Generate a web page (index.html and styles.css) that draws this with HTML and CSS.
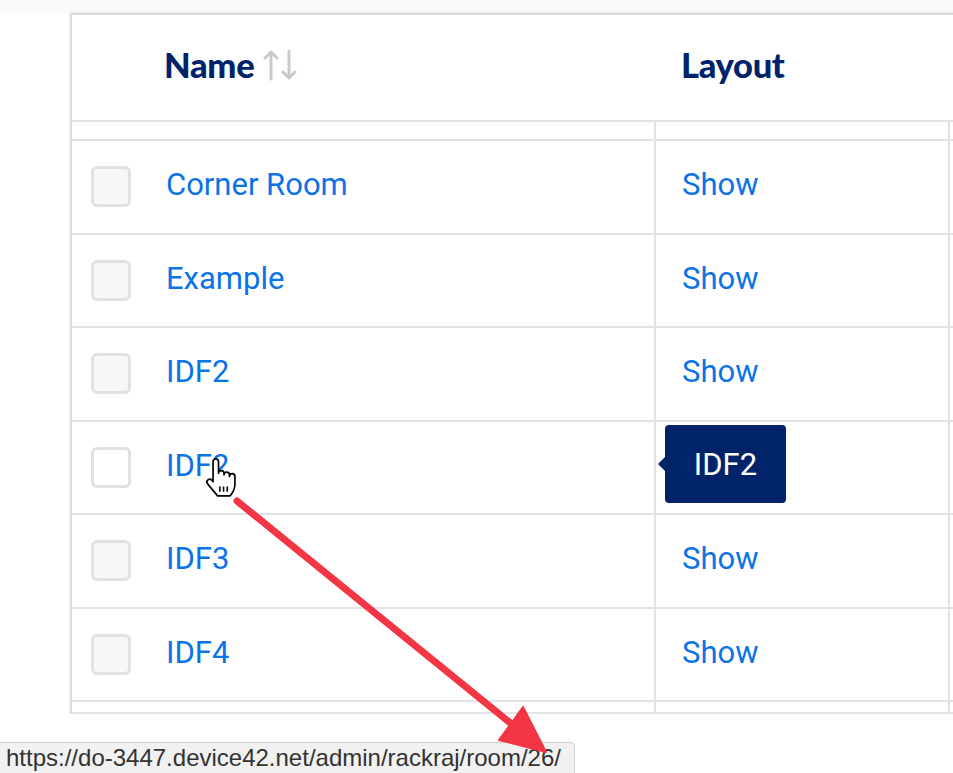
FILE: index.html
```html
<!DOCTYPE html>
<html>
<head>
<meta charset="utf-8">
<link rel="stylesheet" href="styles.css">
</head>
<body>
<div class="topstrip"></div>
<div class="card">
  <div class="row head">
    <div class="cell c-check"></div>
    <div class="cell c-name"><span class="th">Name</span>
      <svg class="sort" width="34" height="32" viewBox="0 0 34 32"><path d="M8 30V3M2 9l6-6 6 6M26 2v27M20 23l6 6 6-6" fill="none" stroke="#c9c9c9" stroke-width="3" stroke-linecap="round" stroke-linejoin="round"/></svg>
    </div>
    <div class="cell c-layout"><span class="th">Layout</span></div>
    <div class="cell c-rest"></div>
  </div>
  <div class="row spacer">
    <div class="cell c-check"></div><div class="cell c-name"></div><div class="cell c-layout bl"></div><div class="cell c-rest bl"></div>
  </div>
  <div class="row body">
    <div class="cell c-check"><span class="cb"></span></div>
    <div class="cell c-name"><a class="lnk">Corner Room</a></div>
    <div class="cell c-layout bl"><a class="lnk">Show</a></div>
    <div class="cell c-rest bl"></div>
  </div>
  <div class="row body">
    <div class="cell c-check"><span class="cb"></span></div>
    <div class="cell c-name"><a class="lnk">Example</a></div>
    <div class="cell c-layout bl"><a class="lnk">Show</a></div>
    <div class="cell c-rest bl"></div>
  </div>
  <div class="row body">
    <div class="cell c-check"><span class="cb"></span></div>
    <div class="cell c-name"><a class="lnk">IDF2</a></div>
    <div class="cell c-layout bl"><a class="lnk">Show</a></div>
    <div class="cell c-rest bl"></div>
  </div>
  <div class="row body hover">
    <div class="cell c-check"><span class="cb"></span></div>
    <div class="cell c-name"><a class="lnk">IDF2</a></div>
    <div class="cell c-layout bl"></div>
    <div class="cell c-rest bl"></div>
  </div>
  <div class="row body">
    <div class="cell c-check"><span class="cb"></span></div>
    <div class="cell c-name"><a class="lnk">IDF3</a></div>
    <div class="cell c-layout bl"><a class="lnk">Show</a></div>
    <div class="cell c-rest bl"></div>
  </div>
  <div class="row body">
    <div class="cell c-check"><span class="cb"></span></div>
    <div class="cell c-name"><a class="lnk">IDF4</a></div>
    <div class="cell c-layout bl"><a class="lnk">Show</a></div>
    <div class="cell c-rest bl"></div>
  </div>
  <div class="row tail">
    <div class="cell c-check"></div><div class="cell c-name"></div><div class="cell c-layout bl"></div><div class="cell c-rest bl"></div>
  </div>
</div>

<div class="tooltip">IDF2</div>

<svg class="cursor" width="38" height="42" viewBox="0 0 36 40">
  <path d="M9.5 4.5a2.6 2.6 0 0 1 5.2 0v11a2.6 2.6 0 0 1 5.2 0v1.5a2.6 2.6 0 0 1 5.2 0v1.5a2.6 2.6 0 0 1 5.2 0v8c0 5-2.5 8-4.5 10.5h-12c-2.5-3-6.5-7.5-9.5-11.5a2.6 2.6 0 0 1 4-3.4l1.2 1.4z" fill="#fff" stroke="#000" stroke-width="1.6" stroke-linejoin="round"/>
  <path d="M16 28v5M19.5 28v5M23 28v5" stroke="#000" stroke-width="1.5"/>
</svg>

<div class="status">https://do-3447.device42.net/admin/rackraj/room/26/</div>

<svg class="annot" width="953" height="773" viewBox="0 0 953 773">
  <line x1="237" y1="501" x2="514" y2="726" stroke="#f23646" stroke-width="7" stroke-linecap="round"/>
  <polygon points="523,707 499,740 546,752" fill="#f23646" stroke="#f23646" stroke-width="2" stroke-linejoin="round"/>
</svg>
</body>
</html>
```

FILE: styles.css
```css
html, body {
  margin: 0;
  padding: 0;
  background: #fff;
  overflow: hidden;
  width: 953px;
  height: 773px;
}
body {
  font-family: Roboto, "Noto Sans", sans-serif;
}
.topstrip {
  height: 13px;
  background: #fafafa;
}
.card {
  margin-left: 70px;
  width: 900px;
  border-left: 2px solid #dcdcdc;
  border-top: 2px solid #dcdcdc;
  box-shadow: -1px -1px 2px rgba(0,0,0,0.06);
  background: #fff;
}
.row {
  display: grid;
  grid-template-columns: 94px 488px 294px 1fr;
  border-bottom: 2px solid #e1e3e7;
  box-sizing: border-box;
}
.row.head { height: 107px; }
.row.spacer { height: 19px; }
.row.body { height: 93.5px; }
.row.tail { height: 12px; }
.cell {
  display: flex;
  align-items: center;
  box-sizing: border-box;
}
.bl { border-left: 2px solid #e1e3e7; }
.c-check { padding-left: 19px; }
.c-layout { padding-left: 26px; }
.head .c-name { margin-left: -2px; }
.head .c-layout { padding-left: 27px; }
.th {
  font-family: Lato, "Open Sans", sans-serif;
  font-weight: 900;
  font-size: 34.5px;
  color: #00236b;
  letter-spacing: -0.3px;
  margin-top: -7px;
}
.sort { margin-left: 9px; margin-top: -5px; }
.cb {
  width: 40px;
  height: 41px;
  box-sizing: border-box;
  border: 3px solid #dfe1e5;
  border-radius: 6px;
  background: #f7f7f8;
}
.hover .cb { background: #fff; }
.lnk {
  color: #0b72e7;
  font-size: 31px;
  font-weight: 400;
  text-decoration: none;
  margin-top: -4px;
}
.tooltip {
  position: absolute;
  left: 665px;
  top: 425px;
  width: 121px;
  height: 78px;
  box-sizing: border-box;
  background: #012369;
  border-radius: 4px;
  color: #fff;
  font-family: Roboto, sans-serif;
  font-size: 31px;
  display: flex;
  align-items: center;
  justify-content: center;
}
.tooltip::before {
  content: "";
  position: absolute;
  left: -7px;
  top: 32px;
  border-top: 7px solid transparent;
  border-bottom: 7px solid transparent;
  border-right: 7px solid #012369;
}
.cursor {
  position: absolute;
  left: 203px;
  top: 457px;
}
.annot {
  position: absolute;
  left: 0;
  top: 0;
  pointer-events: none;
}
.status {
  position: absolute;
  left: 0;
  top: 742px;
  height: 31px;
  width: 575px;
  box-sizing: border-box;
  padding-left: 6px;
  background: #f1f1f1;
  border-top: 1px solid #d2d2d2;
  border-right: 1px solid #d2d2d2;
  border-top-right-radius: 5px;
  font-family: "Liberation Sans", Arial, sans-serif;
  font-size: 24px;
  color: #333;
  line-height: 30px;
  white-space: nowrap;
}
```
